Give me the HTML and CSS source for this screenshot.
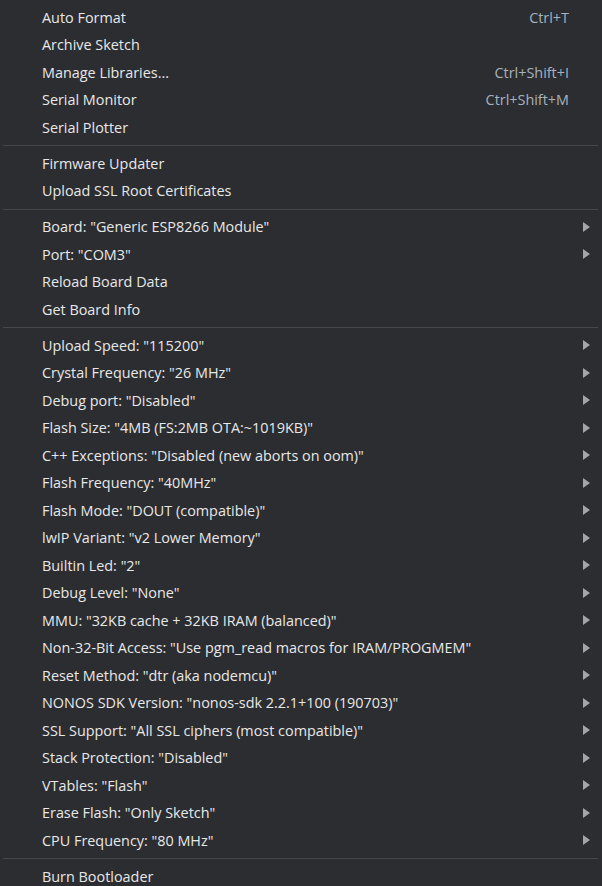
FILE: index.html
```html
<!DOCTYPE html>
<html>
<head>
<meta charset="utf-8">
<link rel="stylesheet" href="styles.css">
</head>
<body>
<div class="menu">
  <div class="item"><span class="label">Auto Format</span><span class="key">Ctrl+T</span></div>
  <div class="item"><span class="label">Archive Sketch</span></div>
  <div class="item"><span class="label">Manage Libraries...</span><span class="key">Ctrl+Shift+I</span></div>
  <div class="item"><span class="label">Serial Monitor</span><span class="key">Ctrl+Shift+M</span></div>
  <div class="item"><span class="label">Serial Plotter</span></div>
  <div class="sep"></div>
  <div class="item"><span class="label">Firmware Updater</span></div>
  <div class="item"><span class="label">Upload SSL Root Certificates</span></div>
  <div class="sep"></div>
  <div class="item sub"><span class="label">Board: "Generic ESP8266 Module"</span><svg class="arrow" width="7" height="10" viewBox="0 0 7 10"><polygon points="0,0 7,5 0,10"/></svg></div>
  <div class="item sub"><span class="label">Port: "COM3"</span><svg class="arrow" width="7" height="10" viewBox="0 0 7 10"><polygon points="0,0 7,5 0,10"/></svg></div>
  <div class="item"><span class="label">Reload Board Data</span></div>
  <div class="item"><span class="label">Get Board Info</span></div>
  <div class="sep"></div>
  <div class="item sub"><span class="label">Upload Speed: "115200"</span><svg class="arrow" width="7" height="10" viewBox="0 0 7 10"><polygon points="0,0 7,5 0,10"/></svg></div>
  <div class="item sub"><span class="label">Crystal Frequency: "26 MHz"</span><svg class="arrow" width="7" height="10" viewBox="0 0 7 10"><polygon points="0,0 7,5 0,10"/></svg></div>
  <div class="item sub"><span class="label">Debug port: "Disabled"</span><svg class="arrow" width="7" height="10" viewBox="0 0 7 10"><polygon points="0,0 7,5 0,10"/></svg></div>
  <div class="item sub"><span class="label">Flash Size: "4MB (FS:2MB OTA:~1019KB)"</span><svg class="arrow" width="7" height="10" viewBox="0 0 7 10"><polygon points="0,0 7,5 0,10"/></svg></div>
  <div class="item sub"><span class="label">C++ Exceptions: "Disabled (new aborts on oom)"</span><svg class="arrow" width="7" height="10" viewBox="0 0 7 10"><polygon points="0,0 7,5 0,10"/></svg></div>
  <div class="item sub"><span class="label">Flash Frequency: "40MHz"</span><svg class="arrow" width="7" height="10" viewBox="0 0 7 10"><polygon points="0,0 7,5 0,10"/></svg></div>
  <div class="item sub"><span class="label">Flash Mode: "DOUT (compatible)"</span><svg class="arrow" width="7" height="10" viewBox="0 0 7 10"><polygon points="0,0 7,5 0,10"/></svg></div>
  <div class="item sub"><span class="label">lwIP Variant: "v2 Lower Memory"</span><svg class="arrow" width="7" height="10" viewBox="0 0 7 10"><polygon points="0,0 7,5 0,10"/></svg></div>
  <div class="item sub"><span class="label">Builtin Led: "2"</span><svg class="arrow" width="7" height="10" viewBox="0 0 7 10"><polygon points="0,0 7,5 0,10"/></svg></div>
  <div class="item sub"><span class="label">Debug Level: "None"</span><svg class="arrow" width="7" height="10" viewBox="0 0 7 10"><polygon points="0,0 7,5 0,10"/></svg></div>
  <div class="item sub"><span class="label">MMU: "32KB cache + 32KB IRAM (balanced)"</span><svg class="arrow" width="7" height="10" viewBox="0 0 7 10"><polygon points="0,0 7,5 0,10"/></svg></div>
  <div class="item sub"><span class="label">Non-32-Bit Access: "Use pgm_read macros for IRAM/PROGMEM"</span><svg class="arrow" width="7" height="10" viewBox="0 0 7 10"><polygon points="0,0 7,5 0,10"/></svg></div>
  <div class="item sub"><span class="label">Reset Method: "dtr (aka nodemcu)"</span><svg class="arrow" width="7" height="10" viewBox="0 0 7 10"><polygon points="0,0 7,5 0,10"/></svg></div>
  <div class="item sub"><span class="label">NONOS SDK Version: "nonos-sdk 2.2.1+100 (190703)"</span><svg class="arrow" width="7" height="10" viewBox="0 0 7 10"><polygon points="0,0 7,5 0,10"/></svg></div>
  <div class="item sub"><span class="label">SSL Support: "All SSL ciphers (most compatible)"</span><svg class="arrow" width="7" height="10" viewBox="0 0 7 10"><polygon points="0,0 7,5 0,10"/></svg></div>
  <div class="item sub"><span class="label">Stack Protection: "Disabled"</span><svg class="arrow" width="7" height="10" viewBox="0 0 7 10"><polygon points="0,0 7,5 0,10"/></svg></div>
  <div class="item sub"><span class="label">VTables: "Flash"</span><svg class="arrow" width="7" height="10" viewBox="0 0 7 10"><polygon points="0,0 7,5 0,10"/></svg></div>
  <div class="item sub"><span class="label">Erase Flash: "Only Sketch"</span><svg class="arrow" width="7" height="10" viewBox="0 0 7 10"><polygon points="0,0 7,5 0,10"/></svg></div>
  <div class="item sub"><span class="label">CPU Frequency: "80 MHz"</span><svg class="arrow" width="7" height="10" viewBox="0 0 7 10"><polygon points="0,0 7,5 0,10"/></svg></div>
  <div class="sep"></div>
  <div class="item"><span class="label">Burn Bootloader</span></div>
</div>
</body>
</html>
```
FILE: styles.css
```css
html, body {
  margin: 0;
  padding: 0;
  background: #2b2d31;
  overflow: hidden;
}
.menu {
  padding-top: 3.5px;
  font-family: "Open Sans", "Noto Sans", sans-serif;
  font-size: 14.4px;
  color: #e8e8e8;
}
.item {
  height: 27.5px;
  display: flex;
  align-items: center;
  padding-left: 42px;
  padding-right: 33px;
}
.item.sub {
  padding-right: 12px;
}
.label {
  flex: 1;
  white-space: nowrap;
}
.key {
  color: #a8b2bd;
}
.arrow {
  fill: #a3a5a8;
  display: block;
}
.sep {
  height: 1px;
  background: #45474b;
  margin: 4px 4px 3.5px 3px;
}
```
